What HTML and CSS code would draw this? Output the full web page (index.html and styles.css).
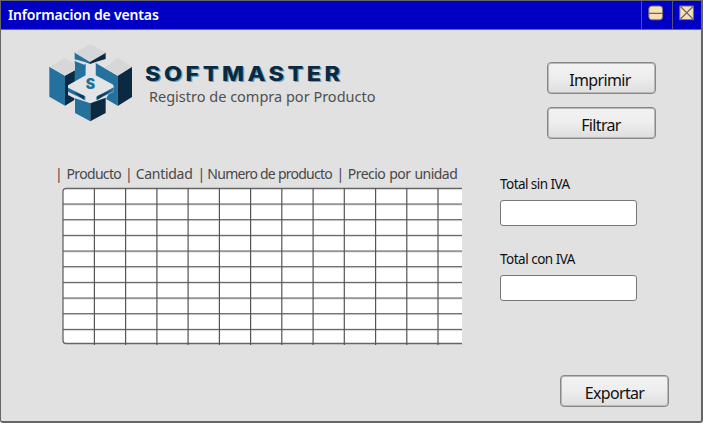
FILE: index.html
```html
<!DOCTYPE html>
<html lang="es">
<head>
<meta charset="utf-8">
<title>Informacion de ventas</title>
<link rel="stylesheet" href="styles.css">
</head>
<body>
<div class="window">
  <header class="titlebar">
    <h1 class="title"><span>Informacion de ventas</span></h1>
    <div class="control minimize">
      <svg width="16" height="16" viewBox="0 0 16 16"><rect x=".8" y="1" width="13.8" height="13.8" rx="3" fill="#f8dfb8" stroke="#77736a"/><path d="M1 8.4h14" stroke="#666" stroke-width="1.2"/></svg>
    </div>
    <div class="control close">
      <svg width="16" height="16" viewBox="0 0 16 16"><rect x=".8" y="1" width="13.6" height="13.6" fill="#f8dfb8" stroke="#77736a"/><path d="M1.5 1.5l12.5 12.5M14 1.5L1.5 14" stroke="#666" stroke-width="1.1"/></svg>
    </div>
  </header>
  <main class="content">
    <section class="left">
      <div class="brand">
        <svg class="logo" width="100" height="92" viewBox="0 0 300 276">
          <path fill="#25719e" d="M104 49l46 27v8l-16-6-30-8z"/>
          <path fill="#0b2941" d="M197 49v20l-28 8-19 7v-8z"/>
          <path fill="#d5d7d8" d="M104 50l48-26 46 26-48 28z"/>
          <path fill="#25719e" d="M28 92l47 27v90l-47-27z"/>
          <path fill="#25719e" d="M75 119l62-34v34l-34 20z"/>
          <path fill="#0b2941" d="M75 119l62-34v10l-30 40-23 16v26l19 10v5l-28 17z"/>
          <path fill="#25719e" d="M104 75l33 13v33l-33 18z"/>
          <path fill="#d5d7d8" d="M28 92l46-26 31 17v20l-30 16z"/>
          <path fill="#25719e" d="M167 81l66 38v90l-35-20 22-43-53-28z"/>
          <path fill="#0b2941" d="M233 119l43-27v91l-43 27z"/>
          <path fill="#d5d7d8" d="M192 95l40-29 44 26-43 27z"/>
          <path fill="#25719e" d="M105 187l46 15v54l-46-25z"/>
          <path fill="#0b2941" d="M151 202l46-17v46l-46 25z"/>
          <path fill="#e3e4e5" d="M137 85h29v34l55 30v18l-70 34-67-35v-18l53-30z"/>
          <path fill="#25719e" d="M84 155l52 26v12l-52-26z"/>
          <path fill="#123b59" d="M100 167l32 12v12z"/>
          <path fill="#25719e" d="M221 154l-52 28v10l52-26z"/>
          <path fill="#123b59" d="M216 162l-44 18v12z"/>
          <text class="logo-letter" x="151" y="160" text-anchor="middle">S</text>
        </svg>
        <div class="brand-text">
          <div class="brand-name"><span>SOFTMASTER</span></div>
          <div class="subtitle"><span>Registro de compra por Producto</span></div>
        </div>
      </div>
      <div class="columns">
        <span>| Producto</span>
        <span class="quantity">| Cantidad</span>
        <span class="number">| Numero de producto</span>
        <span class="price">| Precio por unidad</span>
      </div>
      <svg class="sheet" width="400" height="159" viewBox="0 0 400 159">
        <defs>
          <pattern id="rows" width="401" height="15.67" y="16.5" patternUnits="userSpaceOnUse"><path d="M0 .6h401" stroke="#555" stroke-width="1.2"/></pattern>
        </defs>
        <path d="M401 1.5H4Q1 1.5 1 4.5V153.5Q1 156.5 4 156.5H401" fill="#fff" stroke="#666" stroke-width="1.3"/>
        <rect x="1" y="16" width="400" height="140" fill="url(#rows)"/>
        <path d="M32.4 1v157M63.6 1v157M94.9 1v157M126.1 1v157M157.4 1v157M188.6 1v157M219.8 1v157M251.1 1v157M282.3 1v157M313.6 1v157M344.8 1v157M376 1v157" stroke="#555" stroke-width="1.2"/>
      </svg>
    </section>
    <section class="right">
      <button class="btn print"><span>Imprimir</span></button>
      <button class="btn filter"><span>Filtrar</span></button>
      <label class="field first"><span class="lbl">Total sin IVA</span><input type="text"></label>
      <label class="field"><span class="lbl con">Total con IVA</span><input type="text"></label>
      <button class="btn export"><span>Exportar</span></button>
    </section>
  </main>
</div>
</body>
</html>
```
FILE: styles.css
```css
* { box-sizing: border-box; }
body { margin: 0; font-family: "Noto Sans", "Open Sans", sans-serif; }
.window {
  width: 703px;
  height: 423px;
  border: 1px solid #666;
  border-width: 1px 2px 2px 1px;
  border-radius: 0 0 3px 3px;
  background: #e1e1e1;
  display: flex;
  flex-direction: column;
  overflow: hidden;
}
.titlebar {
  display: flex;
  height: 29px;
  flex: none;
  background: #0000c4;
  border-bottom: 1px solid #666;
}
.title {
  flex: 1;
  margin: 0;
  padding-left: 7px;
  font-size: 14px;
  line-height: 27px;
  font-weight: 600;
  letter-spacing: -0.16px;
  color: #fff;
}
.control { border-left: 1px solid #55557a; padding: 4px 0 0 6px; }
.minimize { width: 31px; }
.close { width: 29px; }
.control svg { display: block; }
.content { display: flex; flex: 1; min-height: 0; }
.left { width: 499px; padding: 6px 0 0 39px; }
.brand { display: flex; height: 92px; }
.logo { flex: none; }
.logo-letter { font: 900 42px Inter, sans-serif; fill: #216f9c; }
.brand-text { padding: 26px 0 0 5px; white-space: nowrap; }
.brand-name {
  font: 800 19.5px/24px Inter, sans-serif;
  letter-spacing: 2.9px;
  color: #0b2941;
  text-shadow: 1px 1px 0 #65a5b9;
  transform: scaleX(1.2);
  transform-origin: 0 50%;
}
.subtitle { padding-left: 4px; font-size: 14.5px; line-height: 21px; color: #505050; letter-spacing: 0; }
.columns {
  display: grid;
  grid-template-columns: 70px 72.5px 139px auto;
  margin: 36px 0 0 15px;
  height: 22px;
  font-size: 14px;
  line-height: 20px;
  color: #484848;
  white-space: nowrap;
  letter-spacing: -0.67px;
  word-spacing: 1.5px;
}
.quantity { letter-spacing: -0.3px; word-spacing: 0; }
.number { letter-spacing: -0.75px; word-spacing: 0; }
.price { letter-spacing: -0.55px; word-spacing: 1px; }
.sheet { display: block; margin: 1px 0 0 22px; }
.right { width: 201px; padding-top: 32px; display: flex; flex-direction: column; align-items: flex-start; }
.btn {
  flex: none;
  width: 109px;
  height: 32px;
  padding: 4px 3px 0 0;
  border: 1px solid #888;
  border-radius: 4px;
  background: linear-gradient(#f2f2f2, #eee 45%, #dedede);
  box-shadow: inset 0 0 0 1px #b8b8b8;
  font: 16px/24px "Noto Sans", "Open Sans", sans-serif;
  letter-spacing: -0.65px;
  color: #111;
  white-space: nowrap;
}
.print, .filter { margin-left: 47px; }
.filter { margin-top: 13px; padding-right: 1px; }
.export { margin: 51px 0 0 60px; padding-right: 0; }
.field { display: block; height: 75px; }
.field.first { margin-top: 35px; }
.lbl { display: table; height: 26px; font-size: 13.5px; line-height: 20px; letter-spacing: -0.55px; color: #111; white-space: nowrap; }
.con { letter-spacing: -0.5px; }
input { display: block; width: 137px; height: 26px; border: 1px solid #777; border-radius: 3px; background: #fff; }
```
